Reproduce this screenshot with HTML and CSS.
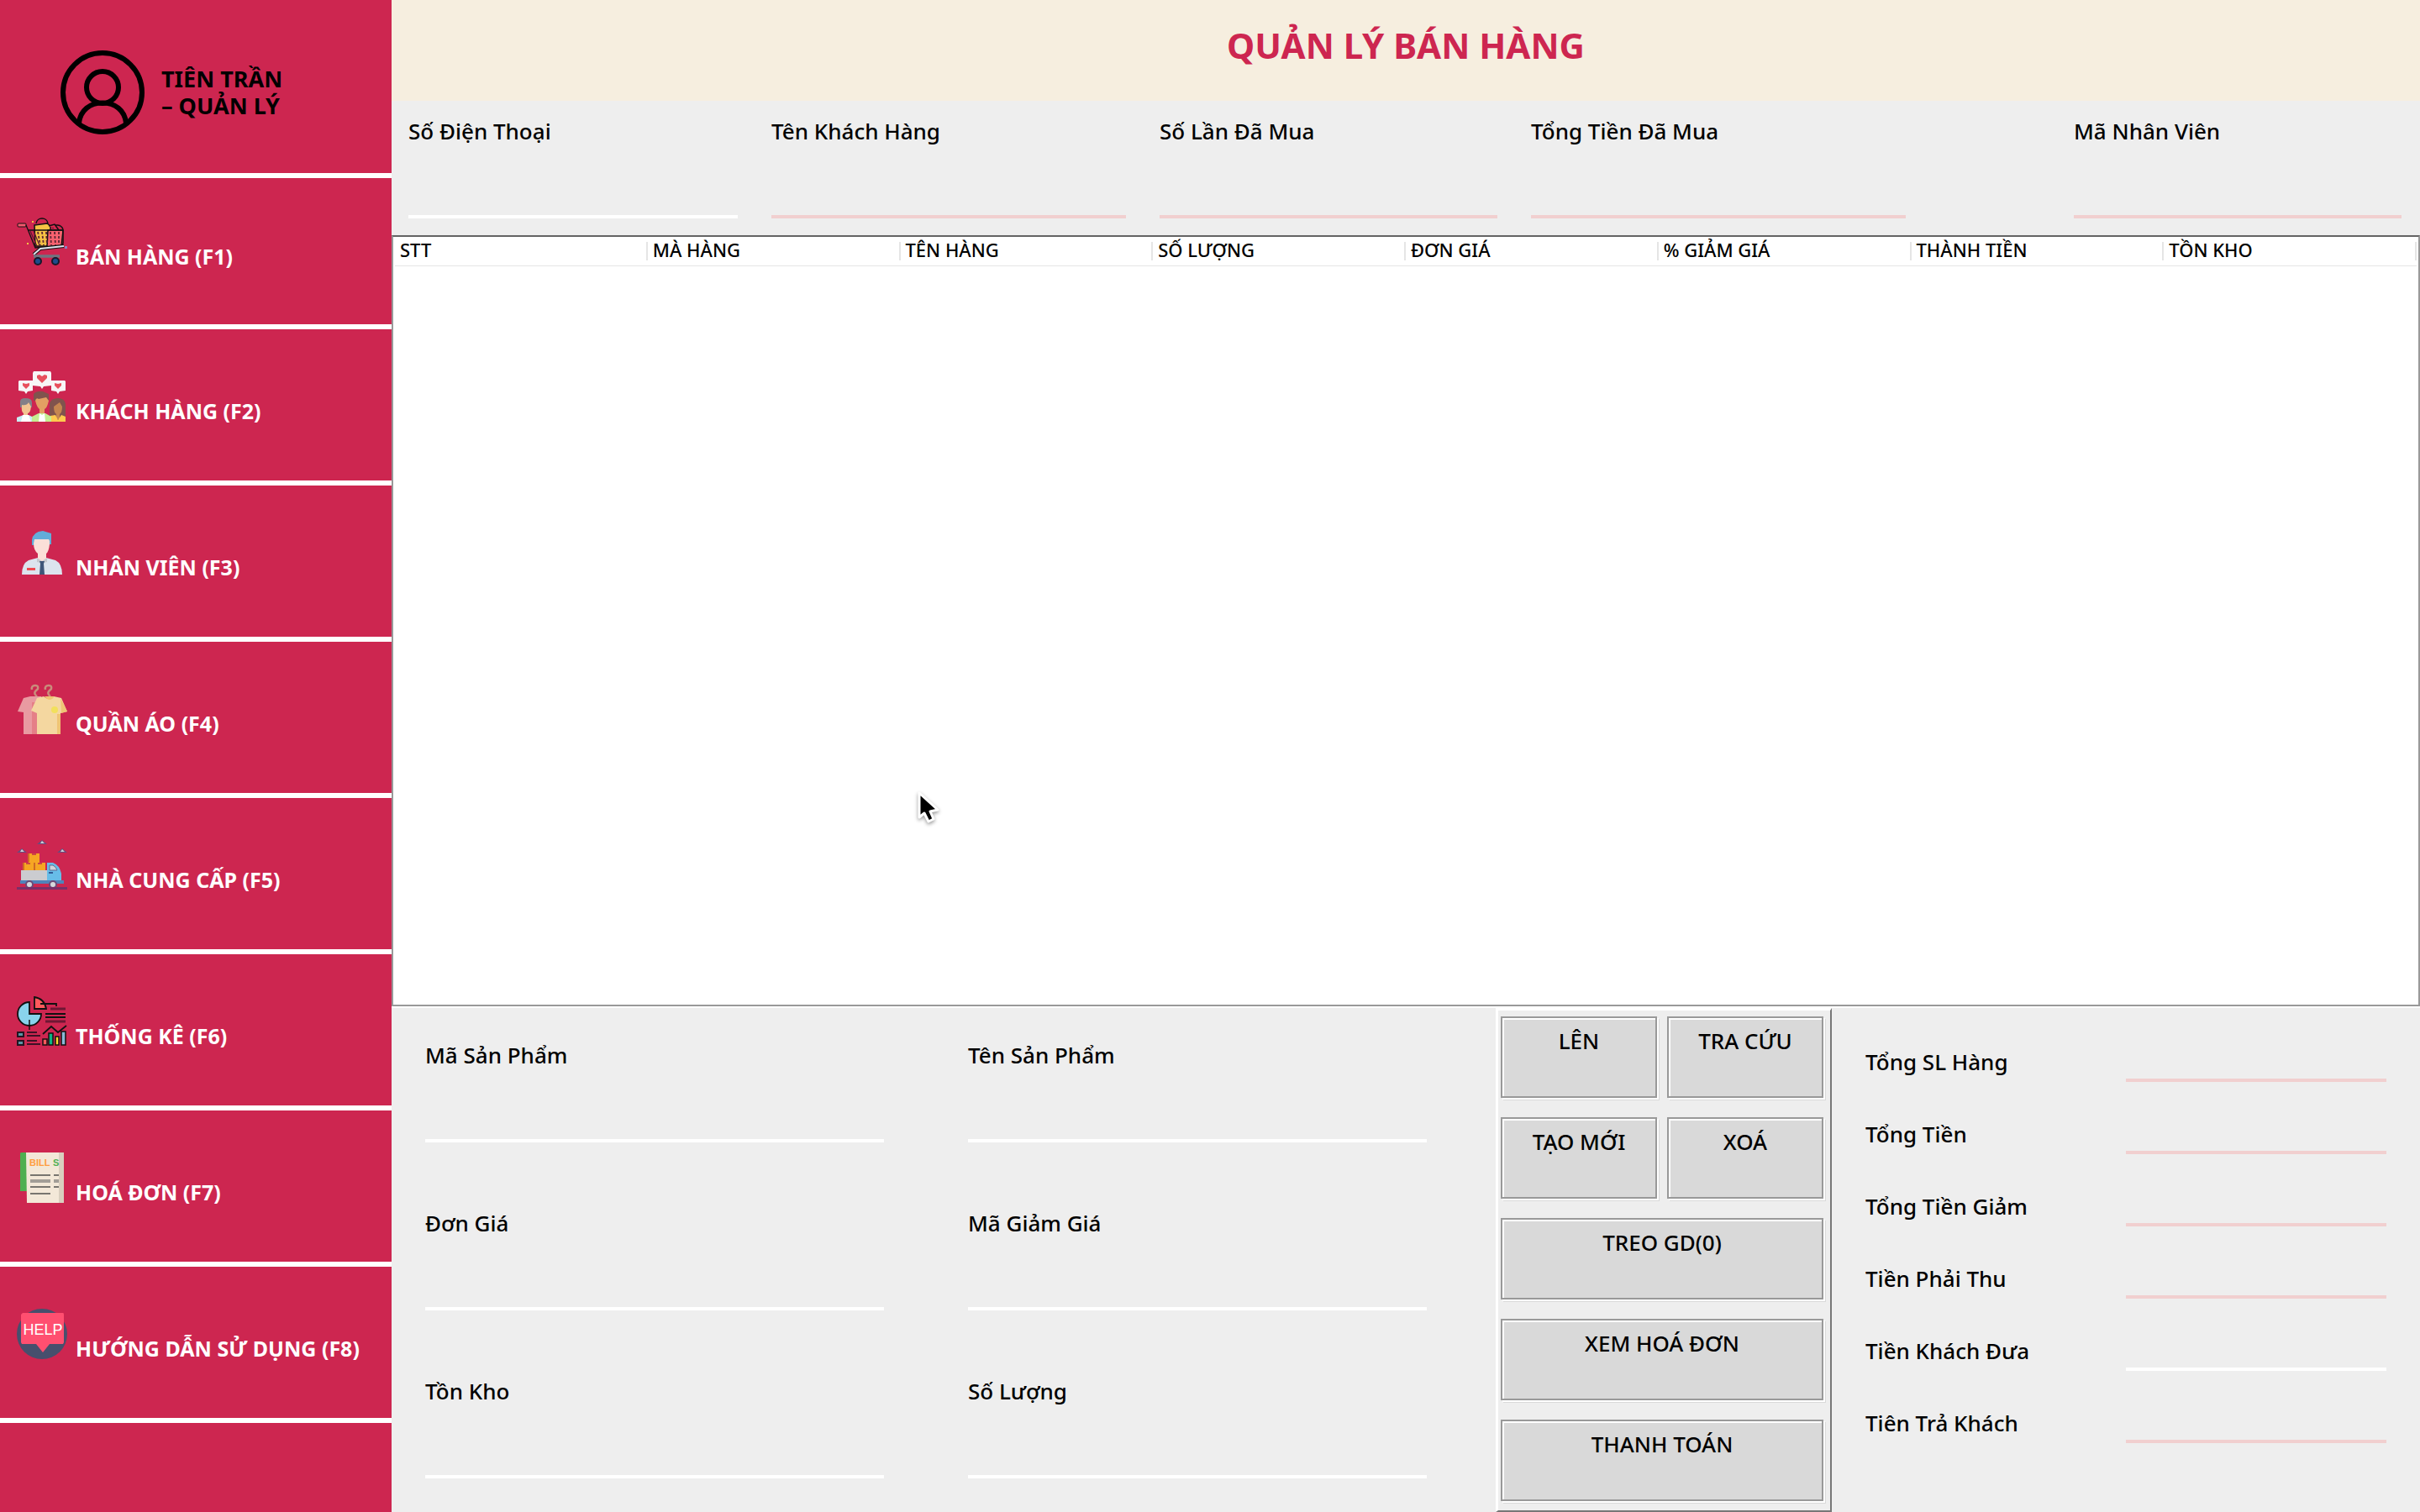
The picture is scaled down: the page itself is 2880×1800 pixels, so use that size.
FILE: index.html
```html
<!DOCTYPE html>
<html lang="vi">
<head>
<meta charset="utf-8">
<title>Quản Lý Bán Hàng</title>
<link rel="stylesheet" href="styles.css">
</head>
<body>
<div class="app">
  <aside class="sidebar">
    <div class="profile">
      <svg class="avatar" viewBox="0 0 100 100" fill="none" stroke="#000" stroke-width="6" aria-hidden="true">
        <circle cx="50" cy="50" r="47"/>
        <circle cx="50" cy="44" r="19"/>
        <path d="M22 86C24 71 35 62.500 50 62.500S76 71 78 86"/>
      </svg>
      <p class="profile-name">TIÊN TRẦN<br>– QUẢN LÝ</p>
    </div>
    <nav class="menu">
      <button class="menu-item" type="button">
        <svg class="menu-icon" viewBox="0 0 60 60" aria-hidden="true">
          <path d="M23 8C24 0 36 0 37 8M43 14C44 8 53 9 55 15" fill="none" stroke="#111" stroke-width="1.500"/>
          <rect x="1" y="8" width="10" height="4" rx="1" fill="#f5596e" stroke="#111"/>
          <path d="M21 10L36 8L40 11V35H22Z" fill="#f6c244" stroke="#111" stroke-width="1.500"/>
          <path d="M37 16H55V32L50 36H36Z" fill="#f8626f" stroke="#111" stroke-width="1.500"/>
          <path d="M38 11L45 9L50 16" fill="#d8284f" stroke="#111" stroke-width="1.500"/>
          <path d="M11 10L22 37L53 34L55 16H13" fill="none" stroke="#111" stroke-width="1.300"/>
          <path d="M16 17L24 35M20 17L27 34" stroke="#5c1733" stroke-width="1.200"/>
          <path d="M25 18L28 34M30 18L32 34M35 18L36 34M40 18L41 34M45 18L46 34M50 18L50 33" stroke="#5c2733" stroke-width="1.800" stroke-dasharray="3 2"/>
          <path d="M56 35L28 38L20 45" fill="none" stroke="#111" stroke-width="4"/>
          <path d="M56 35L28 38L20 45" fill="none" stroke="#dfe4ef" stroke-width="2"/>
          <path d="M20 47H51" stroke="#6f7480" stroke-width="3.500"/>
          <circle cx="25" cy="53" r="4" fill="#1d4c8c" stroke="#16192b" stroke-width="2"/>
          <circle cx="46" cy="53" r="4" fill="#1d4c8c" stroke="#16192b" stroke-width="2"/>
          <path d="M18 5H20V7H18ZM12 31H14V33H12Z" fill="#f6c244"/>
          <path d="M57 35H60V38H57Z" fill="#8c7fc0"/>
        </svg>
        <span>BÁN HÀNG (F1)</span>
      </button>
      <button class="menu-item" type="button">
        <svg class="menu-icon" viewBox="0 0 60 60" aria-hidden="true">
          <path d="M20 0H40L41 2V17L32 18L30 21L28 18L19 17V2Z" fill="#f7f6f7"/>
          <path d="M3 11H19V23L13 24L11 27L9 24L2 23V12ZM41 11H57L58 12V23L51 24L49 27L47 24L41 23Z" fill="#f7f6f7"/>
          <path d="M30 14L24 8V5L27 4L30 6L33 4L36 5V8ZM11 21L7 17V14L11 15L15 14V17ZM49 21L45 17V14L49 15L53 14V17Z" fill="#e8505d"/>
          <path d="M4 43V36Q4 32 10 32Q18 32 18 37V43Z" fill="#827f88"/>
          <path d="M6 40Q12 41 14 37L17 42Q16 50 13 50V54H8V50Q5 48 6 40Z" fill="#f2c491"/>
          <path d="M0 60V55L8 52H14L20 55V60Z" fill="#c9ecf2"/><path d="M5 60L7 52H14L17 60Z" fill="#fff"/>
          <path d="M39 60V38Q41 32 49 32Q57 32 58 39V56L50 60Z" fill="#80534d"/>
          <path d="M44 42L51 37L54 42Q54 49 51 51V57H47V51Q44 49 44 42Z" fill="#c58650"/>
          <path d="M40 60V53L46 52L49 58L53 52L58 54V60Z" fill="#ffc94e"/>
          <path d="M20 35V27Q24 23 31 24L38 27V35Z" fill="#80534d"/>
          <path d="M22 35Q23 31 26 33L35 31L38 35Q36 44 33 45V51H27V45Q24 43 22 35Z" fill="#e3a063"/>
          <path d="M18 60V54L26 50H34L41 54V60Z" fill="#c5ed91"/><path d="M26 60L27 50L30 52L33 50L34 60Z" fill="#fff"/>
        </svg>
        <span>KHÁCH HÀNG (F2)</span>
      </button>
      <button class="menu-item" type="button">
        <svg class="menu-icon" viewBox="0 0 60 60" aria-hidden="true">
          <path d="M18 21V15Q19 5 31 4L41 7V20Z" fill="#63add9"/>
          <path d="M21 14H38L39 16V20Q38 29 35 31V40L30 44L25 39V31Q20 27 20 19Z" fill="#fbdfd8"/>
          <path d="M6 56Q6 43 14 39L25 36H35L46 39Q54 43 54 56Z" fill="#dce4ee"/>
          <path d="M25 31H35V37L30 41L25 37Z" fill="#fbdfd8"/>
          <path d="M24 36L30 40L36 36V41L32 42L30 40L28 42L24 41Z" fill="#c6c9ce"/>
          <path d="M27 40H33L32 43L33 56H27L28 43Z" fill="#3f5679"/>
          <path d="M12 48H22V51H12Z" fill="#ef4b51"/>
        </svg>
        <span>NHÂN VIÊN (F3)</span>
      </button>
      <button class="menu-item" type="button">
        <svg class="menu-icon" viewBox="0 0 60 60" aria-hidden="true">
          <path d="M18 7Q17 2 22 2Q26 2 25 6L22 9Q20 12 24 15M34 7Q33 2 38 2Q42 2 41 6L38 9Q36 12 40 15" fill="none" stroke="#c98c7b" stroke-width="2.500"/>
          <path d="M8 17L16 15H29V60H8V34L1 33Z" fill="#e99aa1"/>
          <path d="M18 22H26V60H18Z" fill="#e57f87"/>
          <path d="M24 17L32 15Q38 21 44 15L53 17L60 33L52 35V60H24V35L17 32Z" fill="#f4d7a0"/>
          <path d="M33 15H45Q39 23 33 15ZM48 36H52V60H48ZM52 17L60 33L53 35Z" fill="#efc474"/>
          <circle cx="45" cy="31" r="4" fill="#f2e05c"/>
        </svg>
        <span>QUẦN ÁO (F4)</span>
      </button>
      <button class="menu-item" type="button">
        <svg class="menu-icon" viewBox="0 0 60 60" aria-hidden="true">
          <path d="M24 5L30 0L36 5ZM0 15L6 10L12 15ZM48 15L54 10L60 15Z" fill="#6a4b7d"/>
          <path d="M28 4L30 1L33 4ZM4 14L6 11L9 14ZM52 14L54 11L57 14Z" fill="#cdd0d5"/>
          <path d="M14 16H27V27H14ZM7 27H34V36H7Z" fill="#f6a623"/>
          <path d="M14 16V26M8 27V36M21 27V36" stroke="#cf6a25" stroke-width="2"/>
          <path d="M18 16H23V18H18ZM11 27H16V29H11ZM25 27H30V29H25Z" fill="#cc4a40"/>
          <path d="M5 36H36V48H5Z" fill="#cbccd0"/>
          <path d="M36 27H43Q51 30 53 40V49H36Z" fill="#67bde8"/>
          <path d="M39 30H43Q47 32 48 36H39Z" fill="#cdd3da" stroke="#5a6b93"/>
          <path d="M38 39H43" stroke="#315b96" stroke-width="2"/>
          <path d="M4 48H56V52H4Z" fill="#5083bb"/>
          <circle cx="15" cy="53" r="4" fill="#d6d9dd" stroke="#6c4a78" stroke-width="2"/>
          <circle cx="43" cy="53" r="4" fill="#d6d9dd" stroke="#6c4a78" stroke-width="2"/>
          <path d="M0 56H60V59H0Z" fill="#7b2f68"/>
        </svg>
        <span>NHÀ CUNG CẤP (F5)</span>
      </button>
      <button class="menu-item" type="button">
        <svg class="menu-icon" viewBox="0 0 60 60" aria-hidden="true">
          <path d="M15 7V21H29A14 14 0 1 1 15 7Z" fill="#89d3ec" stroke="#111" stroke-width="1.800"/>
          <path d="M15 28V40" stroke="#111" stroke-width="1.500"/>
          <path d="M21 15V1Q33 3 35 15Z" fill="#ff5a5c" stroke="#111" stroke-width="1.800"/>
          <path d="M28 9H47V12M34 21H58M34 25H58" fill="none" stroke="#111" stroke-width="1.800"/>
          <path d="M40 15H58M34 30H58" stroke="#6f1734" stroke-width="3"/>
          <path d="M1 43H8V48H1ZM1 53H8V58H1Z" fill="#5a93a4" stroke="#221521" stroke-width="2"/>
          <path d="M12 43H24M12 47H28M12 53H24M12 57H28" stroke="#3d1125" stroke-width="2"/>
          <path d="M31 45L41 36L49 43L59 35" fill="none" stroke="#111" stroke-width="1.800"/>
          <path d="M31 51H36V58H31Z" fill="#ff5a5c" stroke="#111" stroke-width="1.500"/>
          <path d="M38 44H43V58H38Z" fill="#0db483" stroke="#111" stroke-width="1.500"/>
          <path d="M46 48H50V58H46Z" fill="#ffda2d" stroke="#111" stroke-width="1.500"/>
          <path d="M53 42H58V58H53Z" fill="#89b9d6" stroke="#111" stroke-width="1.500"/>
        </svg>
        <span>THỐNG KÊ (F6)</span>
      </button>
      <button class="menu-item" type="button">
        <svg class="menu-icon" viewBox="0 0 60 60" aria-hidden="true">
          <path d="M4 1Q4 0 6 0H12V46H4Z" fill="#4eaf50"/>
          <path d="M11 0H56V60H12Z" fill="#f3e8d8"/>
          <path d="M50 0H56V60H50Z" fill="#d9cfbf"/>
          <text class="bill-word" x="15" y="16" fill="#ff9d3f">BILL</text>
          <text class="bill-word" x="43" y="16" fill="#51b054">S</text>
          <path d="M16 27H40M44 27H50M16 41H40M44 41H50M16 49H40" stroke="#78756f" stroke-width="2"/>
          <path d="M16 34H40M44 34H50" stroke="#a39e97" stroke-width="4"/>
        </svg>
        <span>HOÁ ĐƠN (F7)</span>
      </button>
      <button class="menu-item" type="button">
        <svg class="menu-icon" viewBox="0 0 60 60" aria-hidden="true">
          <circle cx="30" cy="30" r="30" fill="#474f6d"/>
          <path d="M7 5H55Q56 5 56 7V40L55 42H39L31 52L23 42H6L5 40V7Z" fill="#ff4f70"/>
          <text class="help-word" x="31" y="31" text-anchor="middle" fill="#fff">HELP</text>
        </svg>
        <span>HƯỚNG DẪN SỬ DỤNG (F8)</span>
      </button>
    </nav>
  </aside>

  <main class="main">
    <header class="titlebar"><h1>QUẢN LÝ BÁN HÀNG</h1></header>

    <form class="customer">
      <div class="field"><label for="phone">Số Điện Thoại</label><input id="phone" type="text"></div>
      <div class="field"><label for="customer">Tên Khách Hàng</label><input id="customer" type="text" readonly></div>
      <div class="field"><label for="visits">Số Lần Đã Mua</label><input id="visits" type="text" readonly></div>
      <div class="field"><label for="spent">Tổng Tiền Đã Mua</label><input id="spent" type="text" readonly></div>
      <div class="field field-staff"><label for="staff">Mã Nhân Viên</label><input id="staff" type="text" readonly></div>
    </form>

    <section class="cart">
      <table>
        <thead>
          <tr><th>STT</th><th>MÀ HÀNG</th><th>TÊN HÀNG</th><th>SỐ LƯỢNG</th><th>ĐƠN GIÁ</th><th>% GIẢM GIÁ</th><th>THÀNH TIỀN</th><th>TỒN KHO</th></tr>
        </thead>
        <tbody></tbody>
      </table>
      <svg class="cursor" viewBox="0 0 28 40" aria-hidden="true">
        <path d="M3 2V31L9 26L14 36L20 33L16 24L25 22Z" fill="#000" stroke="#fff" stroke-width="3" stroke-linejoin="round"/>
      </svg>
    </section>

    <div class="bottom">
      <form class="product">
        <div class="field"><label for="code">Mã Sản Phẩm</label><input id="code" type="text"></div>
        <div class="field"><label for="name">Tên Sản Phẩm</label><input id="name" type="text"></div>
        <div class="field"><label for="price">Đơn Giá</label><input id="price" type="text"></div>
        <div class="field"><label for="discount">Mã Giảm Giá</label><input id="discount" type="text"></div>
        <div class="field"><label for="stock">Tồn Kho</label><input id="stock" type="text"></div>
        <div class="field"><label for="qty">Số Lượng</label><input id="qty" type="text"></div>
      </form>

      <div class="actions">
        <button class="action" type="button">LÊN</button>
        <button class="action" type="button">TRA CỨU</button>
        <button class="action" type="button">TẠO MỚI</button>
        <button class="action" type="button">XOÁ</button>
        <button class="action action-wide" type="button">TREO GD(0)</button>
        <button class="action action-wide" type="button">XEM HOÁ ĐƠN</button>
        <button class="action action-wide" type="button">THANH TOÁN</button>
      </div>

      <form class="totals">
        <div class="total"><label for="t-qty">Tổng SL Hàng</label><input id="t-qty" type="text" readonly></div>
        <div class="total"><label for="t-sum">Tổng Tiền</label><input id="t-sum" type="text" readonly></div>
        <div class="total"><label for="t-off">Tổng Tiền Giảm</label><input id="t-off" type="text" readonly></div>
        <div class="total"><label for="t-due">Tiền Phải Thu</label><input id="t-due" type="text" readonly></div>
        <div class="total"><label for="t-paid">Tiền Khách Đưa</label><input id="t-paid" type="text"></div>
        <div class="total"><label for="t-change">Tiên Trả Khách</label><input id="t-change" type="text" readonly></div>
      </form>
    </div>
  </main>
</div>
</body>
</html>
```
FILE: styles.css
```css
* {
  box-sizing: border-box;
}

body {
  margin: 0;
  background: #eee;
  color: #000;
  font: 500 26px/32px "Noto Sans", "Open Sans", sans-serif;
}

button,
input {
  font: inherit;
  color: inherit;
  border-radius: 0;
}

.app {
  display: grid;
  grid-template-columns: 466px minmax(0, 1fr);
  min-height: 100vh;
}

/* Sidebar */
.sidebar {
  background: #cd2650;
}

.profile {
  display: flex;
  align-items: center;
  gap: 20px;
  height: 212px;
  padding: 14px 0 0 72px;
  border-bottom: 6px solid #fff;
}

.avatar {
  width: 100px;
  height: 100px;
}

.profile-name {
  margin: 0;
  font-size: 27px;
  font-weight: 700;
}

.menu {
  display: flex;
  flex-direction: column;
}

.menu-item {
  display: flex;
  align-items: flex-end;
  gap: 10px;
  height: 186px;
  padding: 0 20px 67px;
  border: 0;
  border-bottom: 6px solid #fff;
  background: none;
  color: #fff;
  font-size: 25px;
  font-weight: 700;
  white-space: nowrap;
}

.menu-item:first-child {
  height: 180px;
  padding-bottom: 65px;
}

.menu-icon {
  flex: none;
  width: 60px;
  height: 60px;
  margin-bottom: 3px;
}

.bill-word {
  font: 700 11px "Liberation Sans", sans-serif;
}

.help-word {
  font: 18px "Liberation Sans", sans-serif;
}

/* Main column */
.main {
  display: flex;
  flex-direction: column;
}

.titlebar {
  height: 120px;
  padding-top: 30px;
  background: #f6eedf;
  color: #cd2650;
  text-align: center;
}

.titlebar h1 {
  margin: 0;
  font-size: 42px;
  line-height: 48px;
}

.field {
  display: flex;
  flex-direction: column;
}

input {
  width: 100%;
  min-width: 0;
  padding: 0;
  border: 0;
  border-bottom: 4px solid #fff;
  background: none;
  outline: 0;
}

input:read-only {
  border-color: #f1cfcf;
}

.field input {
  height: 88px;
}

.customer {
  display: grid;
  grid-template-columns: 392fr 422fr 402fr 446fr 550fr;
  gap: 40px;
  padding: 20px 22px 20px 20px;
}

.field-staff {
  padding-left: 160px;
}

/* Cart table */
.cart {
  position: relative;
  flex: 1;
  padding: 0 2px;
  border: 2px solid #999;
  border-top-color: #646464;
  background: #fff;
}

.cart table {
  width: 100%;
  table-layout: fixed;
  border-collapse: collapse;
}

.cart th {
  height: 34px;
  padding: 0 6px 3px;
  border-bottom: 1px solid #e5e5e5;
  background: linear-gradient(#e5e5e5, #e5e5e5) right center / 2px 22px no-repeat;
  font-size: 22px;
  font-weight: 500;
  line-height: 30px;
  text-align: left;
}

.cursor {
  position: absolute;
  left: 623px;
  top: 660px;
  width: 28px;
  height: 40px;
  filter: drop-shadow(0 2px 2px #0006);
}

/* Bottom panels */
.bottom {
  display: grid;
  grid-template-columns: 1314fr 400px 700fr;
  border-top: 2px solid #fff;
}

.product {
  display: grid;
  grid-template-columns: 1fr 1fr;
  align-content: start;
  gap: 80px 100px;
  padding: 40px 82px 40px 40px;
}

.actions {
  display: grid;
  grid-template-columns: 1fr 1fr;
  grid-auto-rows: 97px;
  gap: 23px 12px;
  padding: 7px 8px 8px 3px;
  border: 3px solid #fff;
  border-right: 2px solid #777;
  border-bottom: 2px solid #777;
}

.action {
  display: flex;
  justify-content: center;
  align-items: flex-start;
  padding: 11px 0 0;
  border: 2px solid #999;
  background: #d9d9d9;
  box-shadow: inset 2px 2px #fff, 2px 2px #fff, 3px 3px #d9d9d9;
}

.action-wide {
  grid-column: 1 / -1;
}

.totals {
  display: flex;
  flex-direction: column;
  gap: 46px;
  padding: 48px 40px;
}

.total {
  display: grid;
  grid-template-columns: 1fr 1fr;
}

.total input {
  height: 40px;
}
```
